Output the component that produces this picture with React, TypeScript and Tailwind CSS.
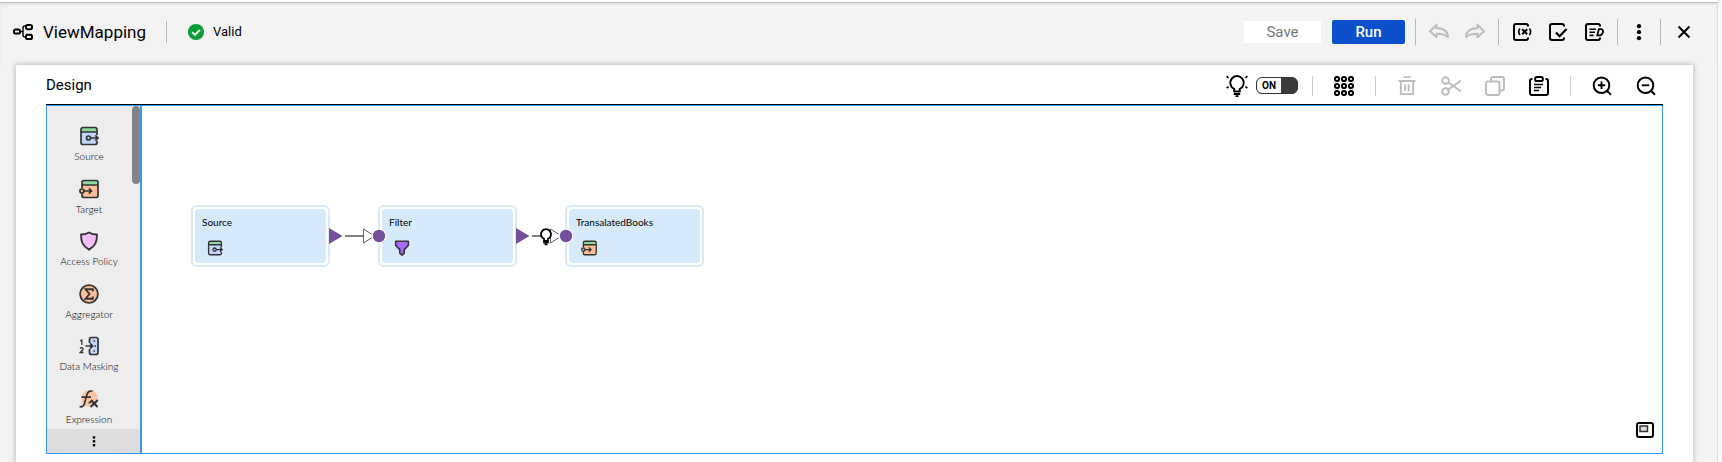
import { useState, type ReactNode } from "react";

type SvgProps = { children: ReactNode; className?: string; size?: number };

function Svg({ children, className = "", size = 20 }: SvgProps) {
  return (
    <svg
      width={size}
      height={size}
      viewBox="0 0 20 20"
      fill="none"
      stroke="currentColor"
      strokeWidth="2"
      className={`shrink-0 ${className}`}
      aria-hidden="true"
    >
      {children}
    </svg>
  );
}

const MappingIcon = () => (
  <Svg>
    <rect x="1" y="7.4" width="6" height="4.2" rx="1.6" />
    <rect x="13" y="3" width="6" height="4.2" rx="1.6" />
    <rect x="13" y="12.8" width="6" height="4.2" rx="1.6" />
    <path d="M7 9.500h3M13 4h-1.200Q10 4 10 6v7q0 2 2 2h1" strokeWidth="1.4" />
  </Svg>
);

const UndoIcon = ({ flip = false }: { flip?: boolean }) => (
  <Svg className={flip ? "-scale-x-100" : ""}>
    <path
      d="M7.600 2.800 1 9.200l6.600 6v-3.400c4.600 0 8.400.2 11.400 3.400C18.800 9.800 15 6.200 7.600 6.200z"
      strokeWidth="1.9"
      strokeLinejoin="round"
    />
  </Svg>
);

const SheetOutline = () => (
  <path d="M16 4.500V4a2 2 0 0 0-2-2H4a2 2 0 0 0-2 2v12a2 2 0 0 0 2 2h10a2 2 0 0 0 2-2v-.5" />
);

const ParamIcon = () => (
  <Svg>
    <SheetOutline />
    <path d="M8 6.500q-2.400 3 0 6.600M17.400 6.500q2.400 3 0 6.600" strokeWidth="1.6" />
    <path d="m10.200 7.200 5 5M15.200 7.200l-5 5" />
  </Svg>
);

const ValidateIcon = () => (
  <Svg>
    <SheetOutline />
    <path d="m8 10.500 3.600 3.700L18.600 7" strokeWidth="2.2" />
  </Svg>
);

const NotesIcon = () => (
  <Svg>
    <SheetOutline />
    <path d="M5.500 7.200H12M5.500 10.300h5.500M5.500 13.400h4" strokeWidth="1.6" />
    <path d="M14.800 7.200h2.600q2 .5 1.500 3-.8 3-3 3.200h-2.600z" strokeWidth="1.8" />
  </Svg>
);

const MoreIcon = () => (
  <Svg>
    <g fill="currentColor" stroke="none">
      <circle cx="10" cy="4.200" r="2.1" />
      <circle cx="10" cy="10.200" r="2.1" />
      <circle cx="10" cy="16.200" r="2.1" />
    </g>
  </Svg>
);

const CloseIcon = () => (
  <Svg>
    <path d="m4.500 4.500 11 11M15.500 4.500l-11 11" />
  </Svg>
);

const BulbIcon = () => (
  <svg width="22" height="22" viewBox="0 0 22 22" fill="none" stroke="currentColor" strokeWidth="2" aria-hidden="true">
    <path d="M8.200 16.500v-2.600A6.700 6.700 0 1 1 13.800 13.900v2.600z" strokeLinejoin="round" />
    <path d="M7.800 19h6.400M9.500 21.200h3" />
    <path d="m.6 1.200 2 1.800M21.400 1.200l-2 1.800M.6 13.200l2-1.600M21.400 13.200l-2-1.600" strokeWidth="1.6" />
  </svg>
);

const GridIcon = () => (
  <Svg>
    {[3, 10, 17].map((y) =>
      [3, 10, 17].map((x) => <circle key={`${x}-${y}`} cx={x} cy={y} r="2.1" />),
    )}
  </Svg>
);

const TrashIcon = () => (
  <Svg>
    <path d="M6.500 1.200h7M1.500 5h17" strokeWidth="1.8" />
    <path d="M3.800 5v13.200h12.400V5M8.300 8.500v6.500M11.700 8.500v6.500" strokeWidth="1.8" />
  </Svg>
);

const ScissorsIcon = () => (
  <Svg>
    <circle cx="4.500" cy="4.500" r="3.3" strokeWidth="1.9" />
    <circle cx="4.500" cy="15.500" r="3.3" strokeWidth="1.9" />
    <path d="m7.300 6.500 12.500 8.700M7.300 13.500l12.500-8.700" strokeWidth="1.8" />
  </Svg>
);

const CopyIcon = () => (
  <Svg>
    <rect x="1" y="5.500" width="13.5" height="13.5" rx="2" strokeWidth="1.9" />
    <path d="M6 5V3a2 2 0 0 1 2-2h9a2 2 0 0 1 2 2v9.500a2 2 0 0 1-2 2h-2" strokeWidth="1.9" />
  </Svg>
);

const ClipboardIcon = () => (
  <Svg>
    <path d="M3.500 3H3a2 2 0 0 0-2 2v12a2 2 0 0 0 2 2h14a2 2 0 0 0 2-2V5a2 2 0 0 0-2-2h-.5" />
    <rect x="6.200" y="1" width="7.6" height="4" rx="1.6" />
    <path d="M5 8.500h9M5 11.500h7M5 14.500h5" strokeWidth="1.6" />
  </Svg>
);

const ZoomIcon = ({ plus = false }: { plus?: boolean }) => (
  <Svg>
    <circle cx="9.500" cy="9.300" r="7.8" />
    <path d={plus ? "M5.800 9.300h7.400M9.500 5.600V13" : "M5.800 9.300h7.400"} strokeWidth="1.9" />
    <path d="m15.200 15 3.800 3.800" />
  </Svg>
);

const SourceIcon = ({ size = 20 }: { size?: number }) => (
  <Svg size={size} className="text-[#333333]">
    <rect x="2" y="1.500" width="16" height="17" rx="2" fill="#c3d7fb" strokeWidth="0" />
    <path d="M3 2h14v4H3z" fill="#8fd8a0" stroke="none" />
    <path d="M18 9V3.500a2 2 0 0 0-2-2H4a2 2 0 0 0-2 2v13a2 2 0 0 0 2 2h12a2 2 0 0 0 2-2V15M2 6h16" strokeWidth="1.7" />
    <circle cx="9.500" cy="12" r="2" strokeWidth="1.7" />
    <path d="M11.500 12H19M16.300 9.300 19 12l-2.700 2.700" strokeWidth="1.7" />
  </Svg>
);

const TargetIcon = ({ size = 20 }: { size?: number }) => (
  <Svg size={size} className="text-[#333333]">
    <rect x="3" y="1.500" width="16" height="17" rx="2" fill="#fdc09a" strokeWidth="0" />
    <path d="M4 2h14v4H4z" fill="#8fd8a0" stroke="none" />
    <path d="M3 9V3.500a2 2 0 0 1 2-2h12a2 2 0 0 1 2 2v13a2 2 0 0 1-2 2H5a2 2 0 0 1-2-2V15M3 6h16" strokeWidth="1.7" />
    <circle cx="2.900" cy="12" r="2" fill="#fdc09a" strokeWidth="1.7" />
    <path d="M5 12h7.500M9.800 9.300l2.700 2.700-2.700 2.700" strokeWidth="1.7" />
  </Svg>
);

const PolicyIcon = () => (
  <Svg className="text-[#333333]">
    <path
      d="M10 1.400c2.500 1.500 5 2.100 8 2.100 0 7-1.500 11.500-8 15.100C3.500 15 2 10.500 2 3.500c3 0 5.500-.6 8-2.100z"
      fill="#f3c0fb"
      strokeWidth="1.8"
      strokeLinejoin="round"
    />
  </Svg>
);

const AggregatorIcon = () => (
  <Svg className="text-[#333333]">
    <circle cx="10" cy="10" r="8.9" fill="#fdc09a" strokeWidth="1.8" />
    <path d="M13.800 7.500V5.300H6.500L10.500 10l-4 4.700h7.300v-2.200" strokeWidth="1.9" />
  </Svg>
);

const MaskingIcon = () => (
  <Svg className="text-[#333333]">
    <path d="M10.500 7V3.500a2 2 0 0 1 2-2H17a2 2 0 0 1 2 2v13a2 2 0 0 1-2 2h-4.500a2 2 0 0 1-2-2V13" fill="#c3d7fb" strokeWidth="1.7" />
    <path d="M6.500 10h7M11 7.300l2.700 2.700-2.700 2.700" strokeWidth="1.7" />
    <path d="M14.500 5h1.500M14.500 15h1.500M15.500 10H17" strokeWidth="1.5" />
    <path d="M1.200 4.800 2.800 4v5M1 12.500q1.500-1.500 2.700-.3t-2.500 4.300h3.200" strokeWidth="1.3" />
  </Svg>
);

const ExpressionIcon = () => (
  <Svg className="text-[#333333]">
    <circle cx="10.500" cy="9.500" r="8.5" fill="#fdc7a6" stroke="none" />
    <path d="M.5 17.500q3.500 1.200 4.800-2.500L8 5.500q1.400-4.500 5.500-3.200M2.500 8.200H12M9.500 13.500q2 .5 2.500-1.500" strokeWidth="1.7" />
    <path d="m12 11 6.500 7M18.800 11 11.500 18" strokeWidth="2" />
  </Svg>
);

const FilterIcon = ({ size = 20 }: { size?: number }) => (
  <Svg size={size} className="text-[#333333]">
    <path
      d="M2 1.500h16v5.200L12.800 12v4.500L10 18.800 7.200 16.500V12L2 6.700z"
      fill="#a967ff"
      strokeWidth="1.9"
      strokeLinejoin="round"
    />
  </Svg>
);

type ToolProps = { label: string; children: ReactNode; disabled?: boolean };

function Tool({ label, children, disabled = false }: ToolProps) {
  return (
    <button type="button" aria-label={label} disabled={disabled} className="block text-black disabled:text-[#bcbcbc]">
      {children}
    </button>
  );
}

const paletteItems = [
  { label: "Source", icon: <SourceIcon /> },
  { label: "Target", icon: <TargetIcon /> },
  { label: "Access Policy", icon: <PolicyIcon /> },
  { label: "Aggregator", icon: <AggregatorIcon /> },
  { label: "Data Masking", icon: <MaskingIcon /> },
  { label: "Expression", icon: <ExpressionIcon /> },
];

const nodes = [
  { label: "Source", place: "left-[49px]", icon: <SourceIcon size={16} /> },
  { label: "Filter", place: "left-[236px]", icon: <FilterIcon size={16} /> },
  { label: "TransalatedBooks", place: "left-[423px]", icon: <TargetIcon size={16} /> },
];

function Links() {
  return (
    <svg className="pointer-events-none absolute inset-0 size-full" fill="none" aria-hidden="true">
      <path d="M203 130h18M390 130h10" stroke="#555" strokeWidth="1.5" />
      {[187, 374].map((x) => (
        <g key={x}>
          <path d={`M${x} 122l13.500 8-13.500 8z`} fill="#734f9c" />
          <path d={`M${x + 34.5} 123v14l11-7z`} stroke="#666" fill="#fff" />
          <circle cx={x + 50} cy="130" r="7.5" fill="#fff" />
          <circle cx={x + 50} cy="130" r="6.2" fill="#734f9c" />
        </g>
      ))}
      <path d="M398 130h4" stroke="#555" strokeWidth="1.500" />
      <g stroke="#000" strokeWidth="1.8">
        <path d="M402 135v-2.200A5 5 0 1 1 406 132.800V135z" fill="#fff" />
        <path d="M401.200 136.800h5.600M402.500 138.500h3" strokeWidth="1.4" />
      </g>
    </svg>
  );
}

export default function App() {
  const [hints, setHints] = useState(true);

  return (
    <div className="flex min-h-screen bg-[#f8f8f8] font-['Roboto',sans-serif] text-black">
      <div className="flex min-w-0 flex-1 flex-col border-t-2 border-r border-t-white border-r-[#dedede] bg-[#f3f3f3]">
        <header className="flex h-[63px] items-center border-t border-[#bdbdbd] pr-[23px] pb-1 pl-[13px] shadow-[inset_0_2px_2px_#e2e2e2]">
          <MappingIcon />
          <h1 className="ml-[10px] text-[17px] leading-6">ViewMapping</h1>
          <span className="mx-5 h-[22px] w-px bg-[#b8b8b8]" />
          <Svg size={18}>
            <circle cx="10" cy="10" r="9" fill="#0a9e35" stroke="none" />
            <path d="m5.800 10.200 3 3 5.600-5.600" stroke="#fff" />
          </Svg>
          <span className="ml-2 text-[13px] leading-5">Valid</span>

          <div className="ml-auto flex items-center">
            <button type="button" disabled className="h-[22px] w-[77px] bg-white text-[15px] leading-5 text-[#777777]">
              Save
            </button>
            <button type="button" className="ml-[11px] h-6 w-[73px] rounded-xs bg-[#0b4fca] text-[15px] leading-5 font-medium text-white">
              Run
            </button>
            <span className="mr-[13px] ml-[10px] h-[26px] w-px bg-[#b8b8b8]" />
            <div className="flex gap-4">
              <Tool label="Undo" disabled><UndoIcon /></Tool>
              <Tool label="Redo" disabled><UndoIcon flip /></Tool>
            </div>
            <span className="mx-[13px] h-[26px] w-px bg-[#b8b8b8]" />
            <div className="flex gap-4">
              <Tool label="Parameters"><ParamIcon /></Tool>
              <Tool label="Validate"><ValidateIcon /></Tool>
              <Tool label="Notes"><NotesIcon /></Tool>
            </div>
            <span className="mr-[11px] ml-[13px] h-[26px] w-px bg-[#b8b8b8]" />
            <Tool label="More"><MoreIcon /></Tool>
            <span className="mr-[13px] ml-[11px] h-[26px] w-px bg-[#b8b8b8]" />
            <Tool label="Close"><CloseIcon /></Tool>
          </div>
        </header>

        <main className="mr-6 ml-4 flex flex-1 flex-col bg-white px-[30px] pb-2 shadow-[0_0_5px_1px_#bdbdbd]">
          <div className="flex h-10 items-center border-b border-black pr-[7px]">
            <h2 className="text-[15px] leading-5">Design</h2>
            <div className="ml-auto flex items-center pt-0.5">
              <BulbIcon />
              <button
                type="button"
                role="switch"
                aria-checked={hints}
                aria-label="Recommendations"
                onClick={() => setHints(!hints)}
                className="ml-2 flex h-[17px] w-[42px] overflow-hidden rounded-md border border-[#333333] bg-[#3b3b3b]"
              >
                <span className="flex h-full w-6 items-center justify-center bg-white text-[10px] leading-4 font-bold">
                  {hints ? "ON" : "OFF"}
                </span>
              </button>
              <span className="mr-[21px] ml-[14px] h-5 w-px bg-[#cccccc]" />
              <Tool label="Arrange"><GridIcon /></Tool>
              <span className="mx-[21px] h-5 w-px bg-[#cccccc]" />
              <div className="flex gap-6">
                <Tool label="Delete" disabled><TrashIcon /></Tool>
                <Tool label="Cut" disabled><ScissorsIcon /></Tool>
                <Tool label="Copy" disabled><CopyIcon /></Tool>
                <Tool label="Paste"><ClipboardIcon /></Tool>
              </div>
              <span className="mx-[21px] h-5 w-px bg-[#cccccc]" />
              <div className="flex gap-6">
                <Tool label="Zoom in"><ZoomIcon plus /></Tool>
                <Tool label="Zoom out"><ZoomIcon /></Tool>
              </div>
            </div>
          </div>

          <div className="flex flex-1 border border-[#3997f5] font-['Lato',sans-serif]">
            <aside className="flex w-[95px] flex-col border-r-2 border-[#3997f5] bg-[#ededed]">
              <div className="flex flex-1">
                <ul className="flex flex-1 flex-col justify-between pt-5 pr-px pb-1">
                  {paletteItems.map((item) => (
                    <li key={item.label} className="flex flex-col items-center gap-1">
                      {item.icon}
                      <span className="text-[10px] leading-3 font-light whitespace-nowrap">{item.label}</span>
                    </li>
                  ))}
                </ul>
                <div className="w-2">
                  <div className="h-[78px] rounded-full bg-[#848484]" />
                </div>
              </div>
              <button type="button" aria-label="More transformations" className="flex h-6 items-center justify-center bg-[#dddddd]">
                <Svg size={12}>
                  <g fill="currentColor" stroke="none">
                    <rect x="8" y="2" width="4" height="4" />
                    <rect x="8" y="8.500" width="4" height="4" />
                    <rect x="8" y="15" width="4" height="4" />
                  </g>
                </Svg>
              </button>
            </aside>

            <section className="relative flex flex-1 items-end justify-end pr-[7px] pb-[13px]">
              {nodes.map((node) => (
                <div
                  key={node.label}
                  className={`absolute top-[99px] ${node.place} h-[62px] w-[139px] rounded-md border-2 border-[#d6eafb] bg-white p-0.5`}
                >
                  <div className="flex h-full flex-col gap-3 rounded-sm bg-[#d6eafb] px-[7px] pt-[7px]">
                    <span className="text-[10px] leading-3">{node.label}</span>
                    <span className="flex pl-[5px]">{node.icon}</span>
                  </div>
                </div>
              ))}
              <Links />
              <Tool label="Overview">
                <Svg>
                  <rect x="2" y="3" width="16" height="14" rx="2" />
                  <rect x="5" y="6" width="7.5" height="5.5" strokeWidth="1.5" stroke="#333" fill="#ddd" />
                </Svg>
              </Tool>
            </section>
          </div>
        </main>
      </div>
      <div className="w-1" />
    </div>
  );
}
